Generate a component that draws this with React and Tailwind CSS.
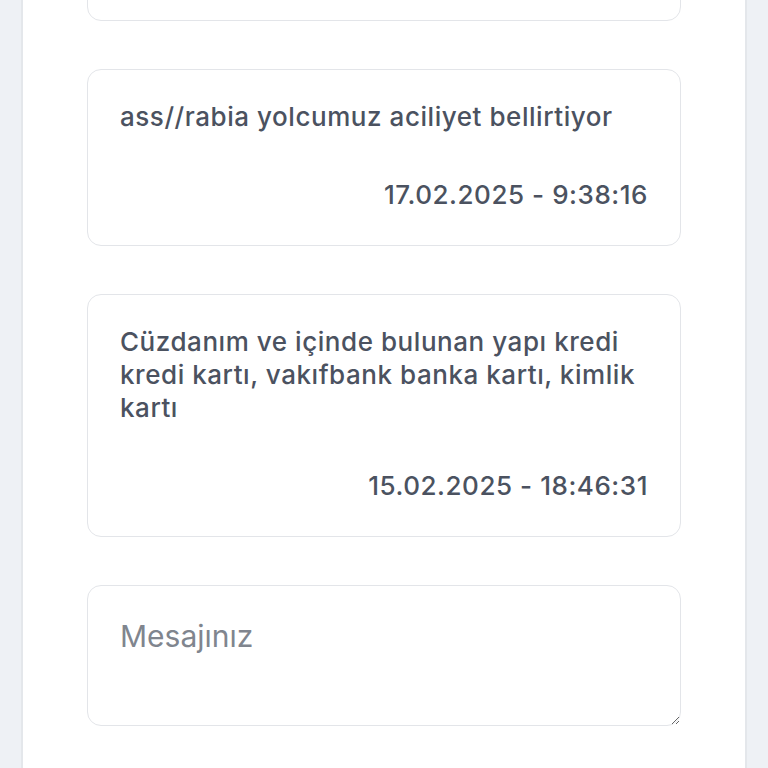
const messages = [
    { id: 1, text: 'Kartımı kaybettim, yardımcı olur musunuz?', date: '18.02.2025 - 11:02:44' },
    { id: 2, text: 'ass//rabia yolcumuz aciliyet bellirtiyor', date: '17.02.2025 - 9:38:16' },
    {
        id: 3,
        text: 'Cüzdanım ve içinde bulunan yapı kredi kredi kartı, vakıfbank banka kartı, kimlik kartı',
        date: '15.02.2025 - 18:46:31',
    },
];

function MessageCard({ message }) {
    return (
        <div className="flex flex-col gap-[45px] rounded-[14px] border border-[#e3e5e9] bg-white px-8 pt-[30px] pb-[34px] text-[26px] font-medium leading-[33px] tracking-[0.55px] text-[#4b5260]">
            <p>{message.text}</p>
            <p className="text-right">{message.date}</p>
        </div>
    );
}

export default function App() {
    return (
        <div
            className="h-screen overflow-hidden bg-[#eef1f5] px-[21px]"
            style={{ fontFamily: 'Inter, "Noto Sans", sans-serif' }}
        >
            <div className="h-full overflow-hidden border-x-2 border-[#e4e7eb] bg-white px-16">
                {/* Message list, scrolled so that the first card shows only its bottom edge */}
                <div className="-mt-[189px] flex flex-col gap-12">
                    {messages.map((message) => (
                        <MessageCard key={message.id} message={message} />
                    ))}

                    <textarea
                        placeholder="Mesajınız"
                        className="h-[141px] w-full shrink-0 rounded-[14px] border border-[#e3e5e9] bg-white px-8 pt-8 text-[30px] leading-[36px] text-[#4b5260] outline-none placeholder:text-[#80858e]"
                    />
                </div>
            </div>
        </div>
    );
}
